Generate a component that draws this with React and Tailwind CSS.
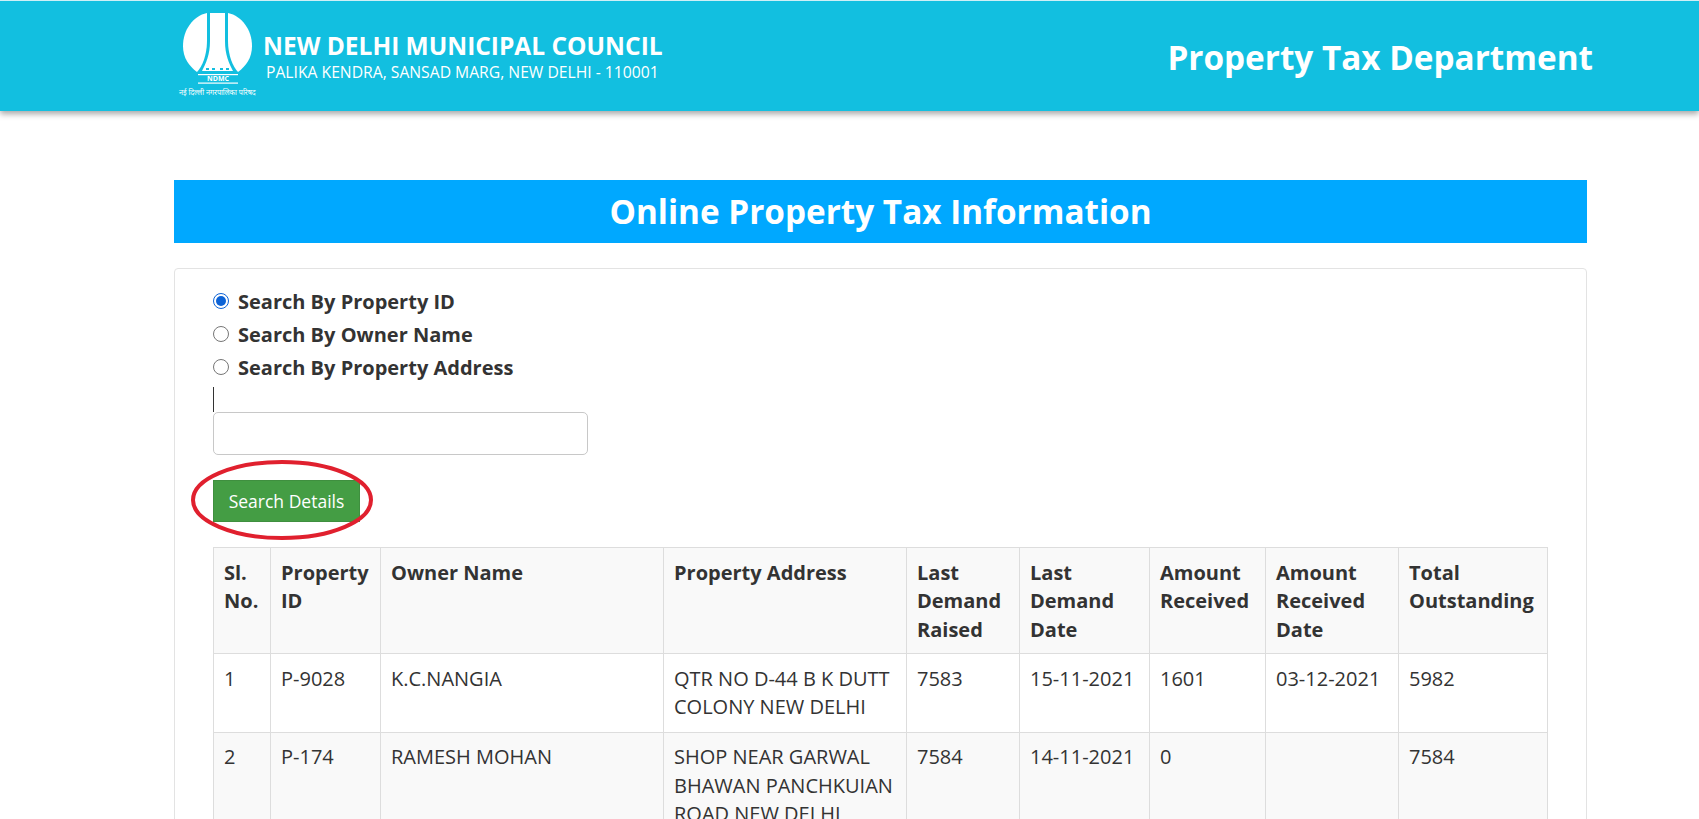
import React from "react";

const headers = [
  "Sl. No.",
  "Property ID",
  "Owner Name",
  "Property Address",
  "Last Demand Raised",
  "Last Demand Date",
  "Amount Received",
  "Amount Received Date",
  "Total Outstanding",
];

const rows = [
  ["1", "P-9028", "K.C.NANGIA", "QTR NO D-44 B K DUTT COLONY NEW DELHI", "7583", "15-11-2021", "1601", "03-12-2021", "5982"],
  ["2", "P-174", "RAMESH MOHAN", "SHOP NEAR GARWAL BHAWAN PANCHKUIAN ROAD NEW DELHI", "7584", "14-11-2021", "0", "", "7584"],
];

const Logo = () => (
  <svg viewBox="0 0 81 74" className="w-[81px] h-[74px] shrink-0" fill="#fff">
    <path d="M30 0 C16 3 6 17 6 33 C6 45 12 53 20 59 C25 54 30 42 30 28 Z" />
    <path d="M51 0 C65 3 75 17 75 33 C75 45 69 53 61 59 C56 54 51 42 51 28 Z" />
    <path d="M33 0 H48 V28 C48 42 52 50 56 58 H25 C29 50 33 42 33 28 Z" />
    <g fill="#12bfe0">
      <rect x="29" y="55" width="3" height="2" />
      <rect x="35" y="55" width="3" height="2" />
      <rect x="43" y="55" width="3" height="2" />
      <rect x="49" y="55" width="3" height="2" />
    </g>
    <rect x="21" y="61" width="40" height="1.2" />
    <text x="41" y="68" textAnchor="middle" fontSize="7" fontWeight="700" fontFamily="Open Sans, sans-serif">NDMC</text>
    <rect x="21" y="69.5" width="40" height="1.2" />
  </svg>
);

const SearchOption = ({ label, checked }) => (
  <label className="flex items-center h-[33px] pt-[1px] font-bold">
    <span
      className={
        checked
          ? "w-4 h-4 -mt-[3px] rounded-full border-[1.5px] border-[#0d63d6] flex items-center justify-center mr-[9px]"
          : "w-4 h-4 -mt-[3px] rounded-full border-[1.5px] border-[#767676] mr-[9px]"
      }
    >
      {checked && <span className="w-[10px] h-[10px] rounded-full bg-[#0d63d6]" />}
    </span>
    {label}
  </label>
);

export default function App() {
  return (
    <div className="h-[819px] overflow-hidden bg-white font-['Open_Sans',sans-serif] text-[20px] leading-[28.57px] text-[#333]">
      <header className="h-[111px] bg-[#12bfe0] shadow-[0_3px_6px_rgba(0,0,0,0.35)] border-t border-[#cfeff6] flex items-start justify-between pl-[177px] pr-[106px]">
        <div className="relative pt-[12px] flex text-white">
          <Logo />
          <div className="ml-[5px] pt-[18px]">
            <div className="text-[24.5px] leading-[30px] font-bold whitespace-nowrap">NEW DELHI MUNICIPAL COUNCIL</div>
            <div className="ml-[3px] text-[15.7px] leading-[22px] whitespace-nowrap">PALIKA KENDRA, SANSAD MARG, NEW DELHI - 110001</div>
          </div>
          <div className="absolute left-[2px] top-[86px] text-[7.2px] leading-[10px] whitespace-nowrap font-['Noto_Sans','DejaVu_Sans',sans-serif]">नई दिल्ली नगरपालिका परिषद</div>
        </div>
        <h2 className="mt-[36px] text-white font-bold text-[33.3px] leading-[40px] whitespace-nowrap">Property Tax Department</h2>
      </header>

      <main className="mx-[174px] mt-[69px] w-[1413px]">
        <h1 className="h-[63px] bg-[#00a8ff] text-white font-bold text-[33.3px] leading-[63px] text-center">Online Property Tax Information</h1>

        <section className="mt-[25px] border border-[#e3e3e3] rounded-[4px] pl-[38px] pt-[16px] h-[600px]">
          <SearchOption label="Search By Property ID" checked />
          <SearchOption label="Search By Owner Name" />
          <SearchOption label="Search By Property Address" />

          <div className="mt-[3px] h-[25px] w-px bg-[#333]" />
          <input className="block w-[375px] h-[43px] border border-[#c8c8c8] rounded-[5px] bg-white" />

          <div className="relative mt-[25px] w-[147px]">
            <button className="block w-[147px] h-[42px] bg-[#449d44] border border-[#3f8f3f] text-white text-[17.5px] leading-[40px] text-center">Search Details</button>
            <svg viewBox="0 0 182 80" className="absolute left-[-22px] top-[-20px] w-[182px] h-[80px] pointer-events-none" fill="none">
              <ellipse cx="91" cy="40" rx="89" ry="38" stroke="#e0202e" strokeWidth="4" />
            </svg>
          </div>

          <table className="mt-[25px] w-[1334px] table-fixed border-collapse">
            <colgroup>
              <col className="w-[57px]" />
              <col className="w-[110px]" />
              <col className="w-[283px]" />
              <col className="w-[243px]" />
              <col className="w-[113px]" />
              <col className="w-[130px]" />
              <col className="w-[116px]" />
              <col className="w-[133px]" />
              <col className="w-[149px]" />
            </colgroup>
            <thead>
              <tr className="bg-[#f9f9f9]">
                {headers.map((h) => (
                  <th key={h} className="border border-[#ddd] px-[10px] pt-[10.5px] pb-[9px] text-left align-top font-bold">{h}</th>
                ))}
              </tr>
            </thead>
            <tbody>
              {rows.map((row, i) => (
                <tr key={row[1]} className={i % 2 ? "bg-[#f9f9f9]" : "bg-white"}>
                  {row.map((cell, j) => (
                    <td key={j} className="border border-[#ddd] px-[10px] pt-[10.5px] pb-[10px] align-top">{cell}</td>
                  ))}
                </tr>
              ))}
            </tbody>
          </table>
        </section>
      </main>
    </div>
  );
}
